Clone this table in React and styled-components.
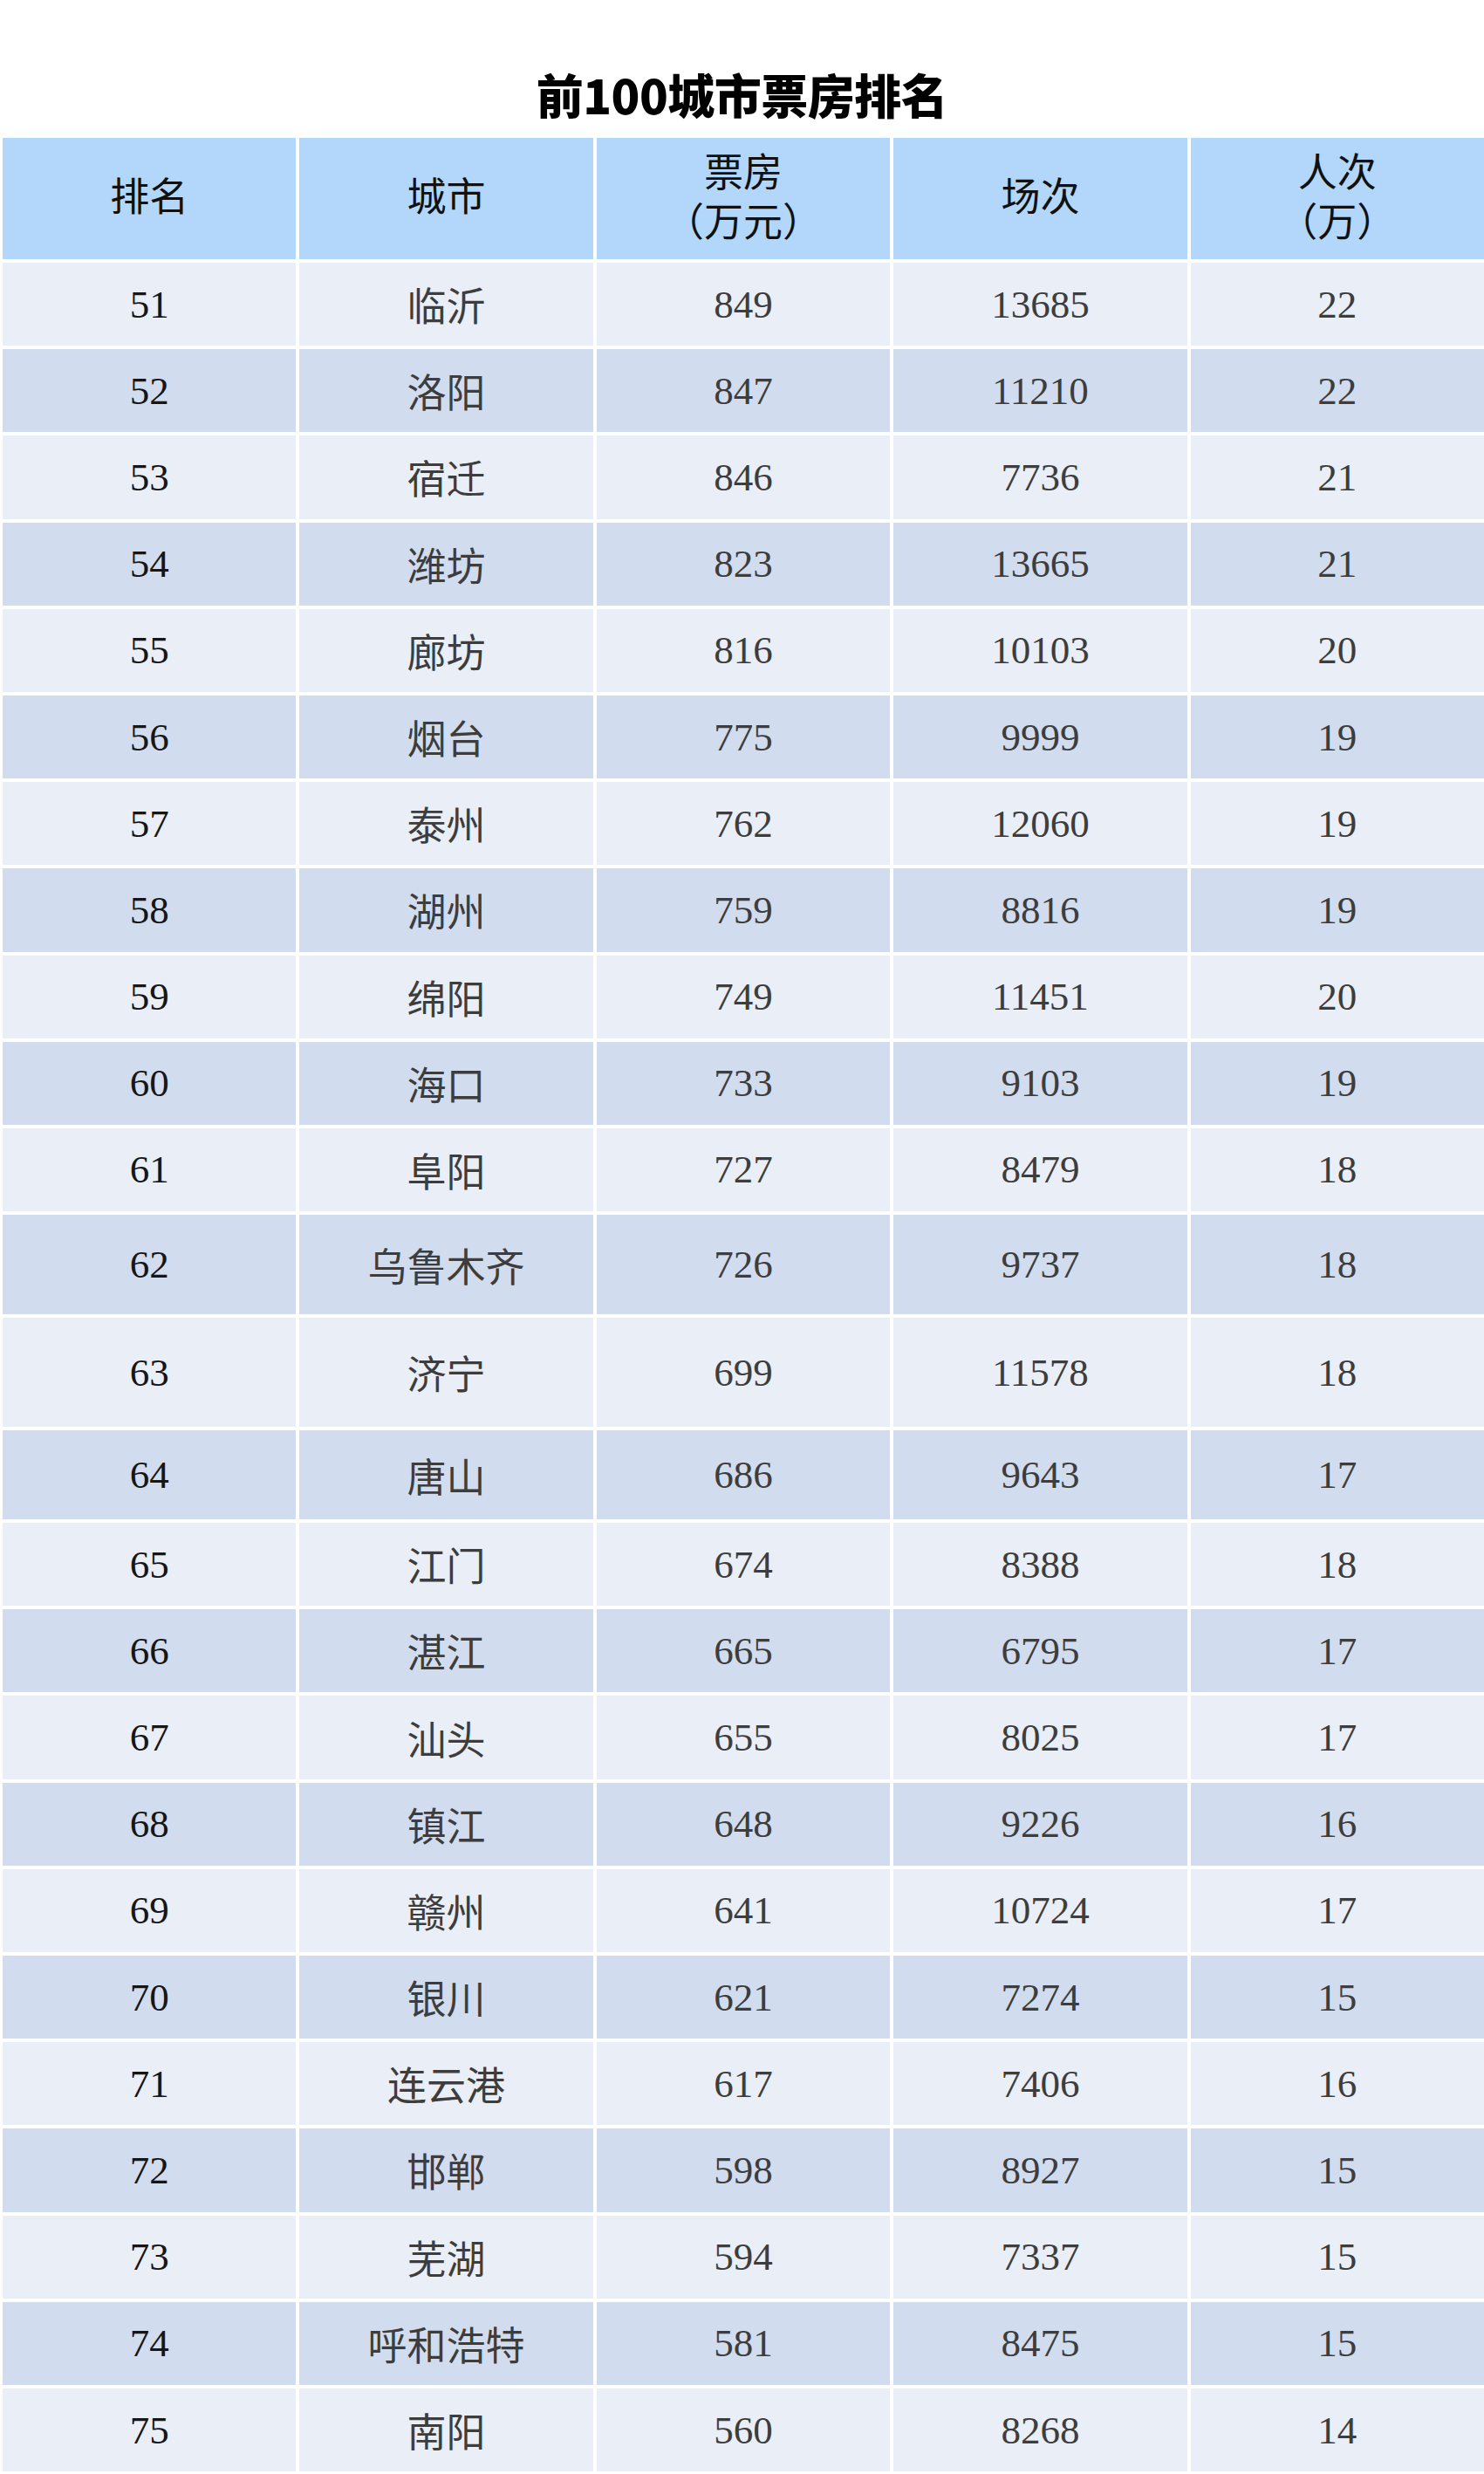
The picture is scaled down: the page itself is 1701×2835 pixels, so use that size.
import React from 'react';
import styled, { createGlobalStyle } from 'styled-components';

const rows = [
    [51, '临沂', 849, 13685, 22],
    [52, '洛阳', 847, 11210, 22],
    [53, '宿迁', 846, 7736, 21],
    [54, '潍坊', 823, 13665, 21],
    [55, '廊坊', 816, 10103, 20],
    [56, '烟台', 775, 9999, 19],
    [57, '泰州', 762, 12060, 19],
    [58, '湖州', 759, 8816, 19],
    [59, '绵阳', 749, 11451, 20],
    [60, '海口', 733, 9103, 19],
    [61, '阜阳', 727, 8479, 18],
    [62, '乌鲁木齐', 726, 9737, 18, 114],
    [63, '济宁', 699, 11578, 18, 125],
    [64, '唐山', 686, 9643, 17, 102],
    [65, '江门', 674, 8388, 18],
    [66, '湛江', 665, 6795, 17],
    [67, '汕头', 655, 8025, 17],
    [68, '镇江', 648, 9226, 16],
    [69, '赣州', 641, 10724, 17],
    [70, '银川', 621, 7274, 15],
    [71, '连云港', 617, 7406, 16],
    [72, '邯郸', 598, 8927, 15],
    [73, '芜湖', 594, 7337, 15],
    [74, '呼和浩特', 581, 8475, 15],
    [75, '南阳', 560, 8268, 14],
];

const headers = [['排名'], ['城市'], ['票房', '（万元）'], ['场次'], ['人次', '（万）']];

const Global = createGlobalStyle`
    body{
        margin:0;
        background:#fff;
    }
`;

const App = () => (
    <Page>
        <Global />
        <Title>前100城市票房排名</Title>
        <Table>
            {headers.map((h, i) => (
                <HeadCell key={'h' + i}>
                    {h.map(line => <span key={line}>{line}</span>)}
                </HeadCell>
            ))}
            {rows.map((r, idx) => (
                <React.Fragment key={r[0]}>
                    {r.slice(0, 5).map((v, i) => (
                        <Cell key={i} $even={idx % 2 === 1} $rank={i === 0} $h={r[5] || 95.2}>
                            {v}
                        </Cell>
                    ))}
                </React.Fragment>
            ))}
        </Table>
    </Page>
);

export default App;

const Page = styled.div`
    width:1701px;
    height:2835px;
    overflow:hidden;
    background:#fff;
`;

const Title = styled.h1`
    margin:0;
    height:158px;
    display:flex;
    align-items:center;
    justify-content:center;
    padding-top:56px;
    box-sizing:border-box;
    font-family:"Noto Sans CJK SC", sans-serif;
    font-weight:900;
    font-size:54px;
    letter-spacing:-0.5px;
    color:#000;
`;

const Table = styled.div`
    display:grid;
    grid-template-columns:repeat(5, 1fr);
    column-gap:4px;
    row-gap:4px;
    padding-left:3px;
    font-family:"Liberation Serif", "Noto Sans CJK SC", serif;
    font-size:45px;
`;

const HeadCell = styled.div`
    height:139px;
    background:#b2d7fa;
    color:#111;
    display:flex;
    flex-direction:column;
    align-items:center;
    justify-content:center;
    line-height:57px;
`;

const Cell = styled.div`
    height:${({$h})=>$h}px;
    background:${({$even})=>$even ? '#d1dcee' : '#e9eef7'};
    color:${({$rank})=>$rank ? '#161616' : '#3d3d3d'};
    display:flex;
    align-items:center;
    justify-content:center;
`;
